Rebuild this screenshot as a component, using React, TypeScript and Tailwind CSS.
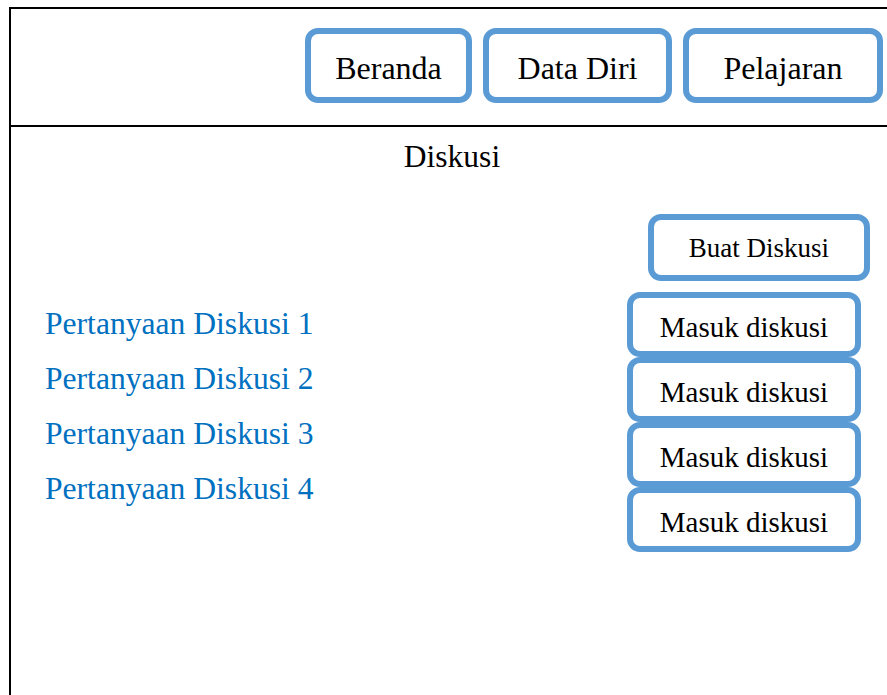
import React from "react";

const serif = { fontFamily: '"Liberation Serif", "Times New Roman", serif' };

function NavBtn({ label, w }: { label: string; w: string }) {
  return (
    <div
      className={`${w} h-[75px] flex items-center justify-center pt-[4px] border-[6px] border-[#5b9bd5] rounded-[13px] bg-white text-[32px] text-black`}
    >
      {label}
    </div>
  );
}

function MasukBtn() {
  return (
    <div className="w-[234px] h-[65px] flex items-center justify-center pt-[5px] border-[6px] border-[#5b9bd5] rounded-[13px] bg-white text-[29px] text-black leading-none">
      Masuk diskusi
    </div>
  );
}

export default function App() {
  return (
    <div className="w-[887px] h-[695px] bg-white overflow-hidden" style={serif}>
      <div className="ml-[9px] mt-[7px] h-[688px] border-l-2 border-t-2 border-black flex flex-col">
        <header className="h-[118px] border-b-2 border-black flex justify-end items-start gap-[11px] pt-[19px] pr-[4px]">
          <NavBtn label="Beranda" w="w-[167px]" />
          <NavBtn label="Data Diri" w="w-[189px]" />
          <NavBtn label="Pelajaran" w="w-[200px]" />
        </header>
        <section className="flex flex-col">
          <div className="pt-[12px] flex justify-center pl-[6px] text-[31.5px] leading-[36px] text-black">
            Diskusi
          </div>
          <div className="mt-[39px] flex justify-end pr-[17px]">
            <div className="w-[222px] h-[67px] flex items-center justify-center border-[6px] border-[#5b9bd5] rounded-[13px] bg-white text-[27px] text-black leading-none pt-[2px]">
              Buat Diskusi
            </div>
          </div>
          <div className="mt-[11px] flex justify-between pr-[26px]">
            <ul className="pl-[34px] mt-[4px] text-[31.6px] leading-[55px] text-[#0070c0]">
              <li>Pertanyaan Diskusi 1</li>
              <li>Pertanyaan Diskusi 2</li>
              <li>Pertanyaan Diskusi 3</li>
              <li>Pertanyaan Diskusi 4</li>
            </ul>
            <div className="flex flex-col">
              <MasukBtn />
              <MasukBtn />
              <MasukBtn />
              <MasukBtn />
            </div>
          </div>
        </section>
      </div>
    </div>
  );
}
